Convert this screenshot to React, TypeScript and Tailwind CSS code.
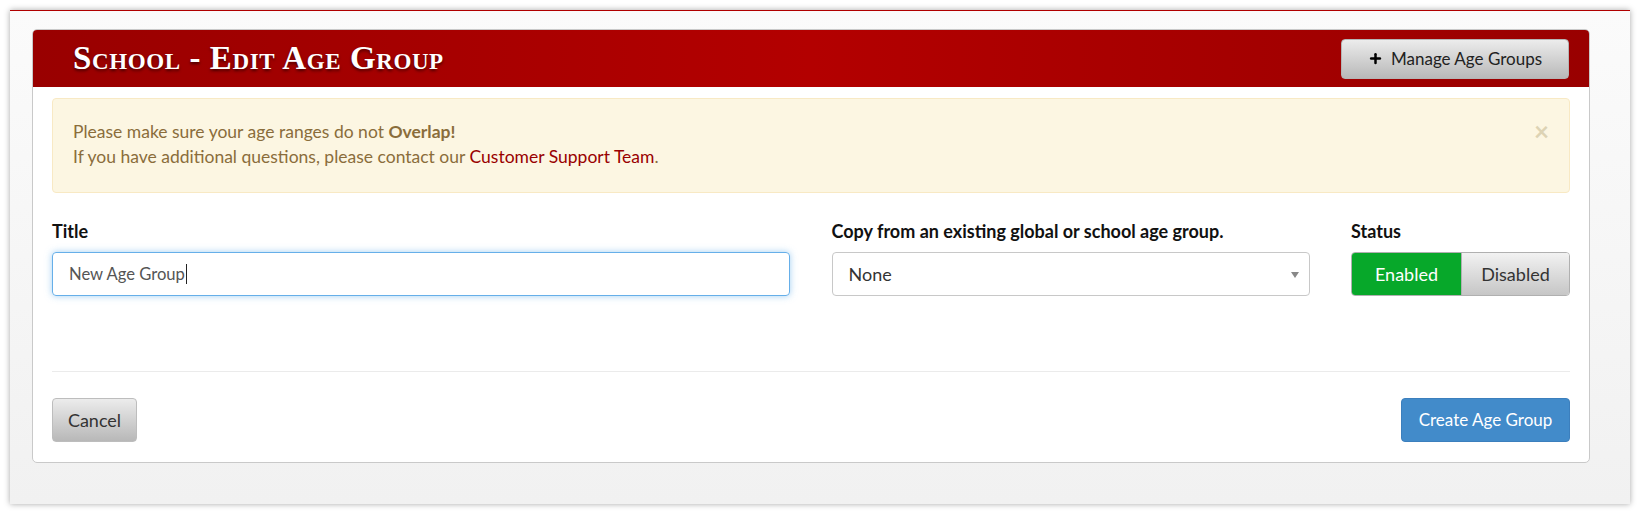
import { Plus } from 'lucide-react';

const sans = { fontFamily: '"Source Sans Pro", Lato, "Open Sans", sans-serif' };

function FieldLabel({ children }: { children: React.ReactNode }) {
  return <label className="block text-[18px] font-bold leading-[20px] text-[#111] mb-[11px]">{children}</label>;
}

export default function App() {
  return (
    <div className="min-h-[514px] bg-white pt-[10px] pl-[10px]" style={sans}>
      <div className="w-[1620px] h-[494px] border-t border-[#b00000] bg-gradient-to-b from-[#fbfbfb] to-[#f1f1f1] shadow-[0_0_6px_rgba(0,0,0,0.35)] pt-[18px] pl-[22px]">
        <div className="w-[1558px] rounded-[5px] border border-[#c9c9c9] bg-white overflow-hidden">
          {/* header bar */}
          <div className="h-[57px] flex items-center justify-between pl-[40px] pr-[20px] bg-gradient-to-r from-[#990000] via-[#b30000] to-[#990000]">
            <h1
              className="text-white text-[33px] font-bold tracking-[0.6px] [font-variant:small-caps] [text-shadow:0_2px_3px_rgba(0,0,0,0.55)]"
              style={{ fontFamily: '"Liberation Serif", "DejaVu Serif", serif' }}
            >
              School - Edit Age Group
            </h1>
            <button className="h-[40px] w-[228px] flex items-center justify-center gap-[8px] rounded-[4px] border border-[#b5b5b5] bg-gradient-to-b from-[#ececec] to-[#b9b9b9] text-[17px] text-[#222]">
              <Plus size={15} strokeWidth={4} className="text-black" />
              Manage Age Groups
            </button>
          </div>

          <div className="px-[19px] pt-[11px] pb-[20px]">
            {/* warning */}
            <div className="relative h-[95px] rounded-[4px] border border-[#f8e9c4] bg-[#fcf6e2] pl-[20px] pt-[20px] text-[17.5px] leading-[25px] text-[#8a6d3b]">
              <p>
                Please make sure your age ranges do not <b>Overlap!</b>
              </p>
              <p>
                If you have additional questions, please contact our{' '}
                <a className="text-[#990000]">Customer Support Team</a>.
              </p>
              <span className="absolute right-[20px] top-[19px] text-[26px] font-bold leading-none text-[#ddd3b4]">×</span>
            </div>

            <div className="mt-[28px] grid grid-cols-[738px_478px_219px] justify-between">
              <div>
                <FieldLabel>Title</FieldLabel>
                <div className="h-[44px] rounded-[4px] border border-[#66afe9] shadow-[0_0_7px_rgba(102,175,233,0.6)] flex items-center pl-[16px] text-[16.6px] text-[#555]">
                  New Age Group
                  <span className="ml-[1px] w-[1px] h-[20px] bg-[#222]" />
                </div>
              </div>
              <div>
                <FieldLabel>Copy from an existing global or school age group.</FieldLabel>
                <div className="h-[44px] rounded-[4px] border border-[#c8c8c8] flex items-center justify-between pl-[16px] pr-[10px] text-[18px] text-[#333]">
                  None
                  <svg width="8" height="6" viewBox="0 0 8 6" className="mt-[2px]">
                    <path d="M0 0h8L4 6z" fill="#888" />
                  </svg>
                </div>
              </div>
              <div>
                <FieldLabel>Status</FieldLabel>
                <div className="h-[44px] flex rounded-[4px] border border-[#b0b0b0] overflow-hidden text-[18px]">
                  <div className="w-[109px] flex items-center justify-center bg-[#07a82a] text-white">Enabled</div>
                  <div className="flex-1 flex items-center justify-center border-l border-[#b0b0b0] bg-gradient-to-b from-[#f2f2f2] to-[#c6c6c6] text-[#333]">Disabled</div>
                </div>
              </div>
            </div>

            <div className="mt-[75px] border-t border-[#ebebeb]" />

            <div className="mt-[26px] flex justify-between">
              <button className="h-[44px] w-[85px] rounded-[4px] border border-[#bdbdbd] bg-gradient-to-b from-[#ececec] to-[#b8b8b8] text-[18px] text-[#333]">
                Cancel
              </button>
              <button className="h-[44px] w-[169px] rounded-[4px] border border-[#3c7fbd] bg-[#428bca] text-[17px] text-white">
                Create Age Group
              </button>
            </div>
          </div>
        </div>
      </div>
    </div>
  );
}
